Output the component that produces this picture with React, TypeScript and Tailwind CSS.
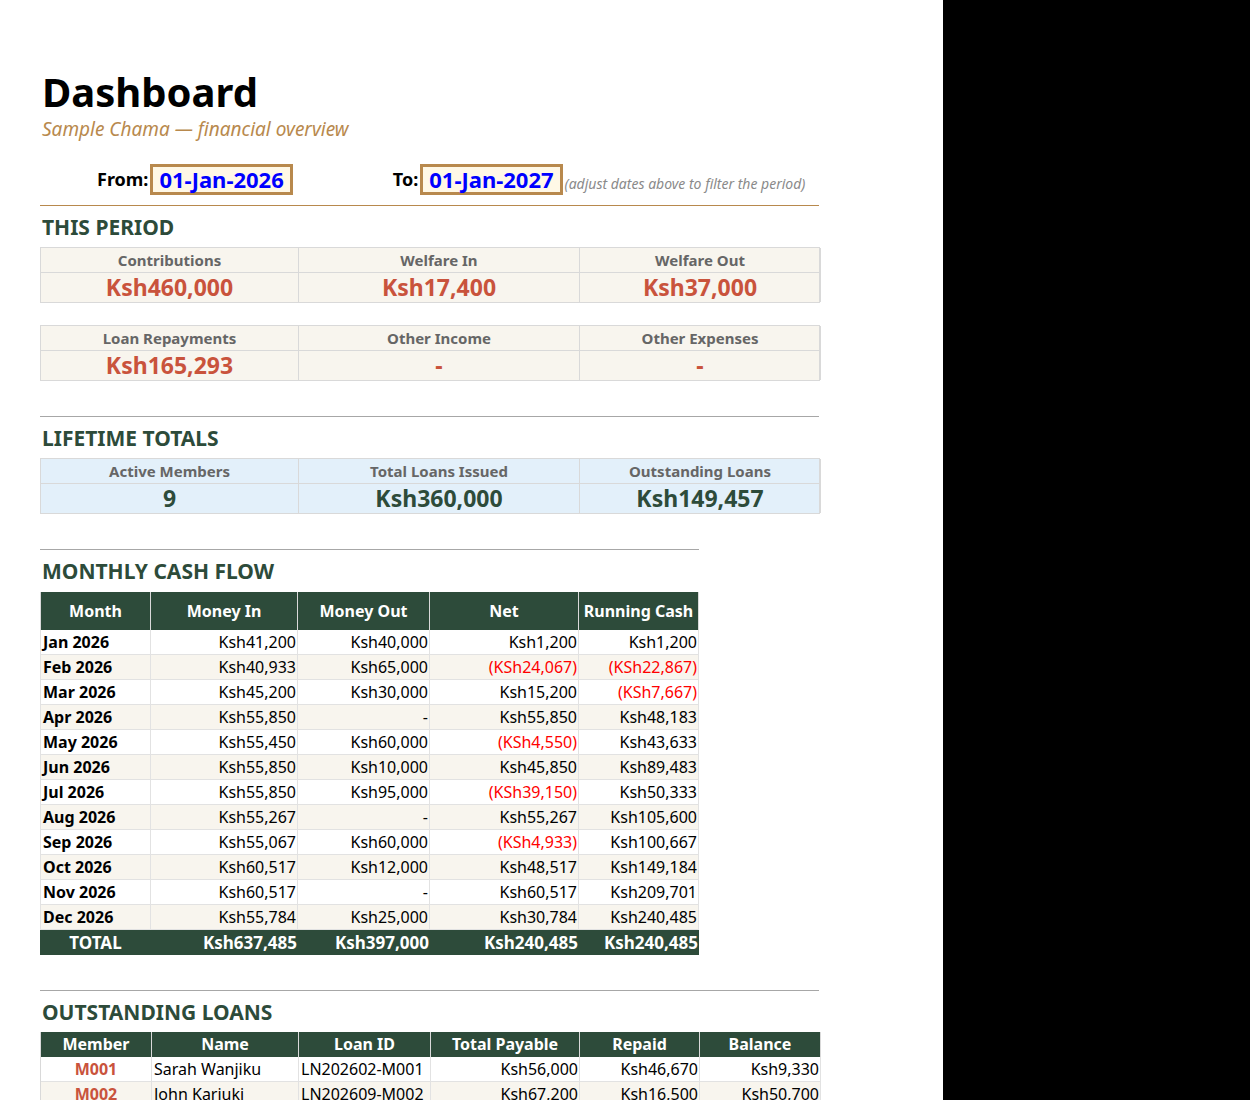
const cols = "grid-cols-[111px_147px_132px_149px_120px_121px]";

const months: [string, string, string, string, string][] = [
  ["Jan 2026", "Ksh41,200", "Ksh40,000", "Ksh1,200", "Ksh1,200"],
  ["Feb 2026", "Ksh40,933", "Ksh65,000", "(KSh24,067)", "(KSh22,867)"],
  ["Mar 2026", "Ksh45,200", "Ksh30,000", "Ksh15,200", "(KSh7,667)"],
  ["Apr 2026", "Ksh55,850", "-", "Ksh55,850", "Ksh48,183"],
  ["May 2026", "Ksh55,450", "Ksh60,000", "(KSh4,550)", "Ksh43,633"],
  ["Jun 2026", "Ksh55,850", "Ksh10,000", "Ksh45,850", "Ksh89,483"],
  ["Jul 2026", "Ksh55,850", "Ksh95,000", "(KSh39,150)", "Ksh50,333"],
  ["Aug 2026", "Ksh55,267", "-", "Ksh55,267", "Ksh105,600"],
  ["Sep 2026", "Ksh55,067", "Ksh60,000", "(KSh4,933)", "Ksh100,667"],
  ["Oct 2026", "Ksh60,517", "Ksh12,000", "Ksh48,517", "Ksh149,184"],
  ["Nov 2026", "Ksh60,517", "-", "Ksh60,517", "Ksh209,701"],
  ["Dec 2026", "Ksh55,784", "Ksh25,000", "Ksh30,784", "Ksh240,485"],
];

const loans = [
  ["M001", "Sarah Wanjiku", "LN202602-M001", "Ksh56,000", "Ksh46,670", "Ksh9,330"],
  ["M002", "John Kariuki", "LN202609-M002", "Ksh67,200", "Ksh16,500", "Ksh50,700"],
];

const serif = "font-[family-name:'Liberation_Serif',serif]";

function Section({ title, wide = true }: { title: string; wide?: boolean }) {
  return (
    <div className={wide ? "w-[779px]" : "w-[659px]"}>
      <div className="h-px bg-[#a7a7a7]" />
      <h2 className={`mt-[9px] h-[24px] ${serif} font-bold text-[21px] leading-[24px] text-[#2d4b3a] pl-[2px]`}>
        {title}
      </h2>
    </div>
  );
}

function Cards({ items, bg, valColor }: { items: [string, string][]; bg: string; valColor: string }) {
  return (
    <div className={`grid grid-cols-[258px_281px_241px] w-[780px] border border-[#d9d9d9] ${bg}`}>
      {items.map(([l]) => (
        <div key={l} className="h-[25px] border-r border-b border-[#d9d9d9] last:border-r-0 text-center text-[15px] leading-[25px] font-bold text-[#666]">
          {l}
        </div>
      ))}
      {items.map(([l, v]) => (
        <div key={l + "v"} className={`h-[29px] border-r border-[#d9d9d9] text-center text-[23px] leading-[29px] font-bold ${valColor}`}>
          {v}
        </div>
      ))}
    </div>
  );
}

export default function App() {
  return (
    <div className="flex w-[1250px] min-h-[1100px] font-[family-name:'Liberation_Sans',Arial,sans-serif] text-black">
      <div className="w-[943px] bg-white pl-[40px] pt-[70px] overflow-hidden">
        <h1 className={`${serif} font-bold text-[40px] leading-[44px] pl-[2px]`}>
          Dashboard
        </h1>
        <p className="pl-[2px] mt-[3px] italic text-[19px] leading-[24px] text-[#b8894d]">Sample Chama — financial overview</p>

        <div className="mt-[22px] h-[32px] flex items-center w-[780px] whitespace-nowrap overflow-hidden">
          <span className="ml-[57px] font-bold text-[18px]">From:</span>
          <span className="ml-[2px] h-[31px] border-[3px] border-[#b8894d] bg-[#fff8e6] px-[6px] text-[22px] leading-[25px] font-bold text-[#0000ff]">01-Jan-2026</span>
          <span className="ml-[100px] font-bold text-[18px]">To:</span>
          <span className="ml-[2px] h-[31px] border-[3px] border-[#b8894d] bg-[#fff8e6] px-[6px] text-[22px] leading-[25px] font-bold text-[#0000ff]">01-Jan-2027</span>
          <span className="ml-[2px] mt-[8px] italic text-[14px] text-[#8a8a8a]">(adjust dates above to filter the period)</span>
        </div>

        <div className="mt-[10px]" />
        <div className="h-px w-[779px] bg-[#b8894d]" />
        <h2 className={`mt-[9px] h-[24px] ${serif} font-bold text-[21px] leading-[24px] text-[#2d4b3a] pl-[2px]`}>THIS PERIOD</h2>
        <div className="mt-[8px]" />
        <Cards bg="bg-[#f8f5ee]" valColor="text-[#c9533c]" items={[["Contributions", "Ksh460,000"], ["Welfare In", "Ksh17,400"], ["Welfare Out", "Ksh37,000"]]} />
        <div className="mt-[22px]" />
        <Cards bg="bg-[#f8f5ee]" valColor="text-[#c9533c]" items={[["Loan Repayments", "Ksh165,293"], ["Other Income", "-"], ["Other Expenses", "-"]]} />

        <div className="mt-[35px]" />
        <Section title="LIFETIME TOTALS" />
        <div className="mt-[8px]" />
        <Cards bg="bg-[#e3f0fa]" valColor="text-[#2d4b3a]" items={[["Active Members", "9"], ["Total Loans Issued", "Ksh360,000"], ["Outstanding Loans", "Ksh149,457"]]} />

        <div className="mt-[35px]" />
        <Section title="MONTHLY CASH FLOW" wide={false} />
        <div className="mt-[9px]" />
        <div className="grid grid-cols-[111px_147px_132px_149px_120px] w-[659px] text-[16px]">
          {["Month", "Money In", "Money Out", "Net", "Running Cash"].map((h) => (
            <div key={h} className="h-[38px] bg-[#2d4b3a] border-r border-[#d9d9d9] last:border-r-0 text-white font-bold text-center leading-[38px] whitespace-nowrap first:border-l">
              {h}
            </div>
          ))}
          {months.map((r, i) =>
            r.map((c, j) => (
              <div
                key={i + "-" + j}
                className={`h-[25px] leading-[25px] border-r border-b border-[#e2e2e2] whitespace-nowrap ${i % 2 ? "bg-[#f8f5ee]" : "bg-white"} ${j === 0 ? "font-bold pl-[2px] border-l" : "text-right pr-[1px]"} ${c.startsWith("(") ? "text-[#ff0000]" : ""}`}
              >
                {c}
              </div>
            ))
          )}
          {["TOTAL", "Ksh637,485", "Ksh397,000", "Ksh240,485", "Ksh240,485"].map((c, j) => (
            <div key={c + j} className={`h-[25px] leading-[25px] bg-[#2d4b3a] text-white font-bold text-[17px] whitespace-nowrap ${j === 0 ? "text-center" : "text-right pr-[1px]"}`}>
              {c}
            </div>
          ))}
        </div>

        <div className="mt-[35px]" />
        <Section title="OUTSTANDING LOANS" />
        <div className="mt-[8px]" />
        <div className={`grid ${cols} w-[780px] text-[16px] border-l border-[#d9d9d9]`}>
          {["Member", "Name", "Loan ID", "Total Payable", "Repaid", "Balance"].map((h) => (
            <div key={h} className="h-[25px] bg-[#2d4b3a] border-r border-[#d9d9d9] text-white font-bold text-center leading-[25px]">
              {h}
            </div>
          ))}
          {loans.map((r, i) =>
            r.map((c, j) => (
              <div
                key={i + "l" + j}
                className={`h-[25px] leading-[25px] border-r border-b border-[#e2e2e2] whitespace-nowrap ${i % 2 ? "bg-[#f8f5ee]" : "bg-white"} ${j === 0 ? "text-center font-bold text-[#c9533c]" : j < 3 ? "pl-[2px]" : "text-right pr-[1px]"}`}
              >
                {c}
              </div>
            ))
          )}
        </div>
      </div>
      <div className="flex-1 bg-black" />
    </div>
  );
}
